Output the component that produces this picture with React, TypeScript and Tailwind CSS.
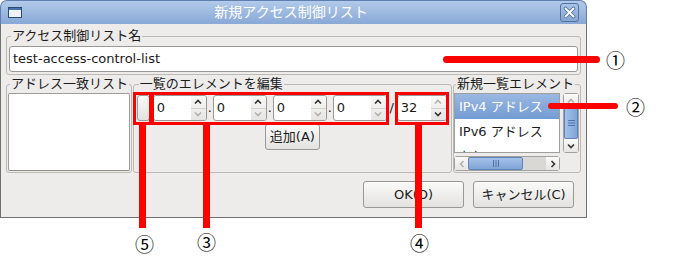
import React from "react";

// Small chevron used by spin buttons and scrollbars
function Chevron({ dir, color }: { dir: "up" | "down" | "left" | "right"; color: string }) {
  const pts = {
    up: "1,5.5 4,2.5 7,5.5",
    down: "1,2.5 4,5.5 7,2.5",
    left: "5.5,1 2.5,4 5.5,7",
    right: "2.5,1 5.5,4 2.5,7",
  }[dir];
  return (
    <svg width="8" height="8" viewBox="0 0 8 8">
      <polyline points={pts} fill="none" stroke={color} strokeWidth="1.6" />
    </svg>
  );
}

function Spin({ value, width, upOn, downOn }: { value: string; width: string; upOn: boolean; downOn: boolean }) {
  return (
    <div className={`flex h-[26px] ${width} overflow-hidden rounded-[3px] border border-[#9a9894] bg-white`}>
      <div className="flex flex-1 items-center pl-[3px] text-[13px] text-[#1a1a1a]">{value}</div>
      <div className="flex w-[15px] flex-col bg-linear-to-b from-[#f8f8f7] to-[#e6e5e3]">
        <div className="flex flex-1 items-center justify-center">
          <Chevron dir="up" color={upOn ? "#333333" : "#b3b1ac"} />
        </div>
        <div className="flex flex-1 items-center justify-center border-t border-[#d3d1cd]">
          <Chevron dir="down" color={downOn ? "#333333" : "#b3b1ac"} />
        </div>
      </div>
    </div>
  );
}

function Group({ title, className, children }: { title: string; className: string; children: React.ReactNode }) {
  return (
    <fieldset className={`rounded-[3px] border border-[#bcbab5] ${className}`}>
      <legend className="ml-[2px] px-[1px] text-[13px] leading-[16px] text-[#1a1a1a]">{title}</legend>
      {children}
    </fieldset>
  );
}

function Mark({ children, className }: { children: React.ReactNode; className: string }) {
  return (
    <span className={`absolute font-['Noto_Sans_CJK_JP',sans-serif] text-[19px] leading-none text-black ${className}`}>
      {children}
    </span>
  );
}

export default function App() {
  return (
    <div className="relative h-[262px] w-[700px] overflow-hidden bg-white font-['DejaVu_Sans','Noto_Sans_CJK_JP',sans-serif] text-[13px] text-[#1a1a1a]">
      {/* Dialog window */}
      <div className="flex w-[587px] flex-col">
        <div className="flex h-[24px] items-center rounded-t-[7px] border-x border-t border-[#5f7fae] bg-linear-to-b from-[#b2caea] to-[#88a8d6] px-[7px]">
          <svg width="14" height="11" viewBox="0 0 14 11">
            <rect x="0.5" y="0.5" width="13" height="10" fill="#eef2f7" stroke="#2b4a78" />
            <rect x="1" y="1" width="12" height="2" fill="#4a72ad" />
          </svg>
          <div className="flex-1 text-center text-[14px] text-white">新規アクセス制御リスト</div>
          <div className="flex h-[19px] w-[19px] items-center justify-center rounded-[3px] border border-[#52729f] bg-linear-to-b from-[#a9c3e8] to-[#86a6d4]">
            <svg width="13" height="13" viewBox="0 0 13 13">
              <path d="M2.5 2.5 L10.5 10.5 M10.5 2.5 L2.5 10.5" stroke="#4d6c99" strokeWidth="3.6" strokeLinecap="round" />
              <path d="M2.5 2.5 L10.5 10.5 M10.5 2.5 L2.5 10.5" stroke="#ffffff" strokeWidth="2" strokeLinecap="round" />
            </svg>
          </div>
        </div>

        <div className="flex flex-col border-x border-b border-[#707070] bg-[#edeceb] px-[5px] pb-[9px] pt-[4px]">
          <Group title="アクセス制御リスト名" className="px-[2px] pb-[2px]">
            <div className="mt-[2px] flex h-[26px] items-center rounded-[3px] border border-[#9a9894] bg-white pl-[3px] text-[13px]">
              test-access-control-list
            </div>
          </Group>

          <div className="mt-[1px] flex gap-[1px]">
            <Group title="アドレス一致リスト" className="flex w-[126px] flex-col px-[1px] pb-[1px]">
              <div className="mt-[1px] flex-1 rounded-[2px] border border-[#a09e9a] border-b-[#8d8b87] bg-white" />
            </Group>

            <Group title="一覧のエレメントを編集" className="flex w-[320px] flex-col items-start px-[3px]">
              <div className="mt-[3px] flex items-center">
                <div className="h-[26px] w-[13px] rounded-[3px] border border-[#9a9894] bg-linear-to-b from-[#fafaf9] to-[#e3e2df]" />
                <div className="ml-[3px] flex items-center">
                  <Spin value="0" width="w-[54px]" upOn={true} downOn={false} />
                  <span className="w-[6px] text-center leading-[26px]">.</span>
                  <Spin value="0" width="w-[54px]" upOn={true} downOn={false} />
                  <span className="w-[6px] text-center leading-[26px]">.</span>
                  <Spin value="0" width="w-[54px]" upOn={true} downOn={false} />
                  <span className="w-[6px] text-center leading-[26px]">.</span>
                  <Spin value="0" width="w-[54px]" upOn={true} downOn={false} />
                  <span className="w-[10px] text-center leading-[26px]">/</span>
                  <Spin value="32" width="w-[50px]" upOn={false} downOn={true} />
                </div>
              </div>
              <div className="mt-[3px] flex h-[26px] w-[55px] items-center justify-center self-center rounded-[3px] border border-[#9a9894] bg-linear-to-b from-[#fafaf9] to-[#e3e2df]">
                追加(A)
              </div>
            </Group>

            <Group title="新規一覧エレメント" className="flex w-[127px] flex-col pb-[1px] pr-[1px]">
              <div className="mt-[1px] flex gap-[3px]">
                <div className="h-[60px] w-[106px] overflow-hidden border border-[#a09e9a] bg-white">
                  <div className="flex h-[25px] items-center bg-linear-to-b from-[#9ab8e2] to-[#739bd3] pl-[4px] text-white">
                    IPv4 アドレス
                  </div>
                  <div className="flex h-[25px] items-center pl-[4px]">IPv6 アドレス</div>
                  <div className="flex h-[25px] items-center pl-[4px]">なし</div>
                </div>
                <div className="flex h-[60px] w-[16px] flex-col rounded-[3px] border border-[#a3a19d] bg-[#dad8d4]">
                  <div className="flex h-[13px] items-center justify-center bg-linear-to-b from-[#fafaf9] to-[#e6e5e2]">
                    <Chevron dir="up" color="#b3b1ac" />
                  </div>
                  <div className="flex flex-1 items-center justify-center rounded-[2px] border border-[#5f84ba] bg-linear-to-r from-[#a5c2e8] to-[#7fa4d8]">
                    <svg width="7" height="8" viewBox="0 0 7 8">
                      <path d="M0 1.5 H7 M0 4 H7 M0 6.5 H7" stroke="#4f73a8" strokeWidth="1" />
                    </svg>
                  </div>
                  <div className="flex h-[13px] items-center justify-center bg-linear-to-b from-[#fafaf9] to-[#e6e5e2]">
                    <Chevron dir="down" color="#333333" />
                  </div>
                </div>
              </div>
              <div className="mt-[3px] flex h-[15px] w-[106px] rounded-[3px] border border-[#a3a19d] bg-[#dad8d4]">
                <div className="flex w-[13px] items-center justify-center bg-linear-to-b from-[#fafaf9] to-[#e6e5e2]">
                  <Chevron dir="left" color="#b3b1ac" />
                </div>
                <div className="flex w-[55px] items-center justify-center rounded-[2px] border border-[#5f84ba] bg-linear-to-b from-[#a5c2e8] to-[#7fa4d8]">
                  <svg width="8" height="7" viewBox="0 0 8 7">
                    <path d="M1.5 0 V7 M4 0 V7 M6.5 0 V7" stroke="#4f73a8" strokeWidth="1" />
                  </svg>
                </div>
                <div className="flex-1" />
                <div className="flex w-[13px] items-center justify-center bg-linear-to-b from-[#fafaf9] to-[#e6e5e2]">
                  <Chevron dir="right" color="#333333" />
                </div>
              </div>
            </Group>
          </div>

          <div className="mt-[8px] flex justify-end gap-[9px] pr-[7px]">
            <div className="flex h-[27px] w-[101px] items-center justify-center rounded-[3px] border border-[#9a9894] bg-linear-to-b from-[#fafaf9] to-[#e3e2df]">
              OK(O)
            </div>
            <div className="flex h-[27px] w-[101px] items-center justify-center rounded-[3px] border border-[#9a9894] bg-linear-to-b from-[#fafaf9] to-[#e3e2df]">
              キャンセル(C)
            </div>
          </div>
        </div>
      </div>

      {/* Red annotation overlay */}
      <div className="absolute left-[133px] top-[92px] h-[33px] w-[19px] border-[3px] border-[#ff0000]" />
      <div className="absolute left-[151px] top-[92px] h-[33px] w-[238px] border-[3px] border-[#ff0000]" />
      <div className="absolute left-[395px] top-[92px] h-[33px] w-[54px] border-[3px] border-[#ff0000]" />

      <div className="absolute left-[443px] top-[56px] h-[7px] w-[157px] rounded-full bg-[#ff0000]" />
      <div className="absolute left-[548px] top-[103px] h-[6px] w-[70px] rounded-full bg-[#ff0000]" />
      <div className="absolute left-[139px] top-[124px] h-[104px] w-[7px] bg-[#ff0000]" />
      <div className="absolute left-[203px] top-[124px] h-[104px] w-[7px] bg-[#ff0000]" />
      <div className="absolute left-[415px] top-[124px] h-[104px] w-[7px] bg-[#ff0000]" />

      <Mark className="left-[606px] top-[50px]">①</Mark>
      <Mark className="left-[626px] top-[97px]">②</Mark>
      <Mark className="left-[135px] top-[234px]">⑤</Mark>
      <Mark className="left-[197px] top-[232px]">③</Mark>
      <Mark className="left-[410px] top-[233px]">④</Mark>
    </div>
  );
}
